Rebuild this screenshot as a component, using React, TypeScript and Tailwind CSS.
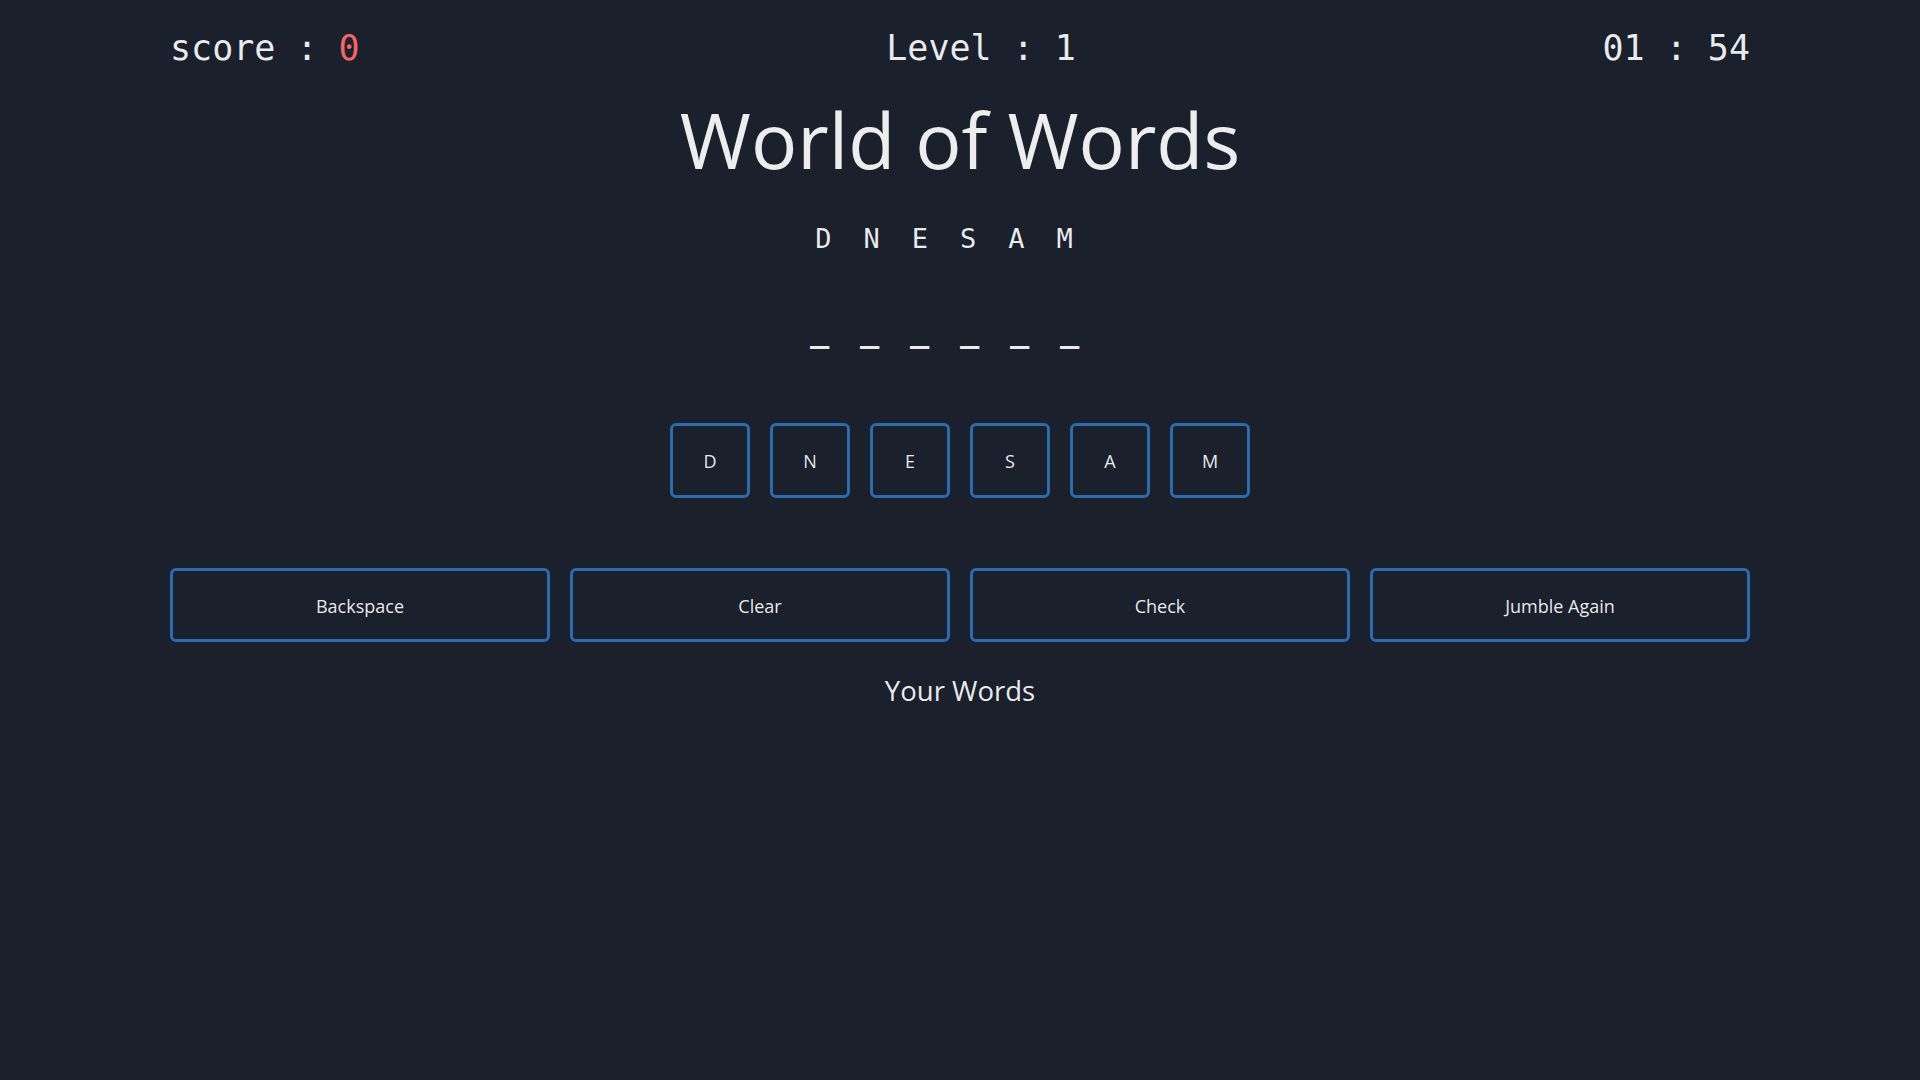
import { useState } from 'react'

const mono = "font-['DejaVu_Sans_Mono','Liberation_Mono',monospace]"
const sans = "font-['Open_Sans','Noto_Sans',sans-serif]"

const letters = ['D', 'N', 'E', 'S', 'A', 'M']
const actions = ['Backspace', 'Clear', 'Check', 'Jumble Again']

export default function App() {
  const [score] = useState(0)
  const [level] = useState(1)
  const [time] = useState({ min: '01', sec: '54' })

  return (
    <div className={`min-h-screen w-full bg-[#1A202C] text-[rgba(255,255,255,0.92)] ${sans}`}>
      <div className="mx-auto flex w-[1580px] flex-col items-center">
        <div className={`flex w-full items-center justify-between pt-[28px] text-[35px] leading-[40px] ${mono}`}>
          <span className="whitespace-pre">
            score : <span className="text-[#F56565]">{score}</span>
          </span>
          <span className="whitespace-pre">Level : {level}</span>
          <span className="whitespace-pre">
            {time.min} : {time.sec}
          </span>
        </div>

        <h1 className="mt-[32px] text-[77px] leading-[80px] font-normal">World of Words</h1>

        <div className={`mt-[43px] text-[27px] leading-[32px] tracking-[32px] ${mono}`}>{letters.join('')}</div>

        <div className={`mt-[55px] text-[32px] leading-[40px] font-bold tracking-[30.7px] ${mono}`}>
          {'_'.repeat(letters.length)}
        </div>

        <div className="mt-[73px] flex gap-5">
          {letters.map((l, i) => (
            <button
              key={i}
              className="flex h-[75px] w-[80px] items-center justify-center rounded-md border-[3px] border-[#2B6CB0] pt-[2px] text-[18px]"
            >
              {l}
            </button>
          ))}
        </div>

        <div className="mt-[70px] grid w-full grid-cols-4 gap-5">
          {actions.map((a) => (
            <button
              key={a}
              className="flex h-[74px] items-center justify-center rounded-md border-[3px] border-[#2B6CB0] pt-[2px] text-[18px]"
            >
              {a}
            </button>
          ))}
        </div>

        <h2 className="mt-[33px] text-[27.5px] leading-[32px] font-normal">Your Words</h2>
      </div>
    </div>
  )
}
